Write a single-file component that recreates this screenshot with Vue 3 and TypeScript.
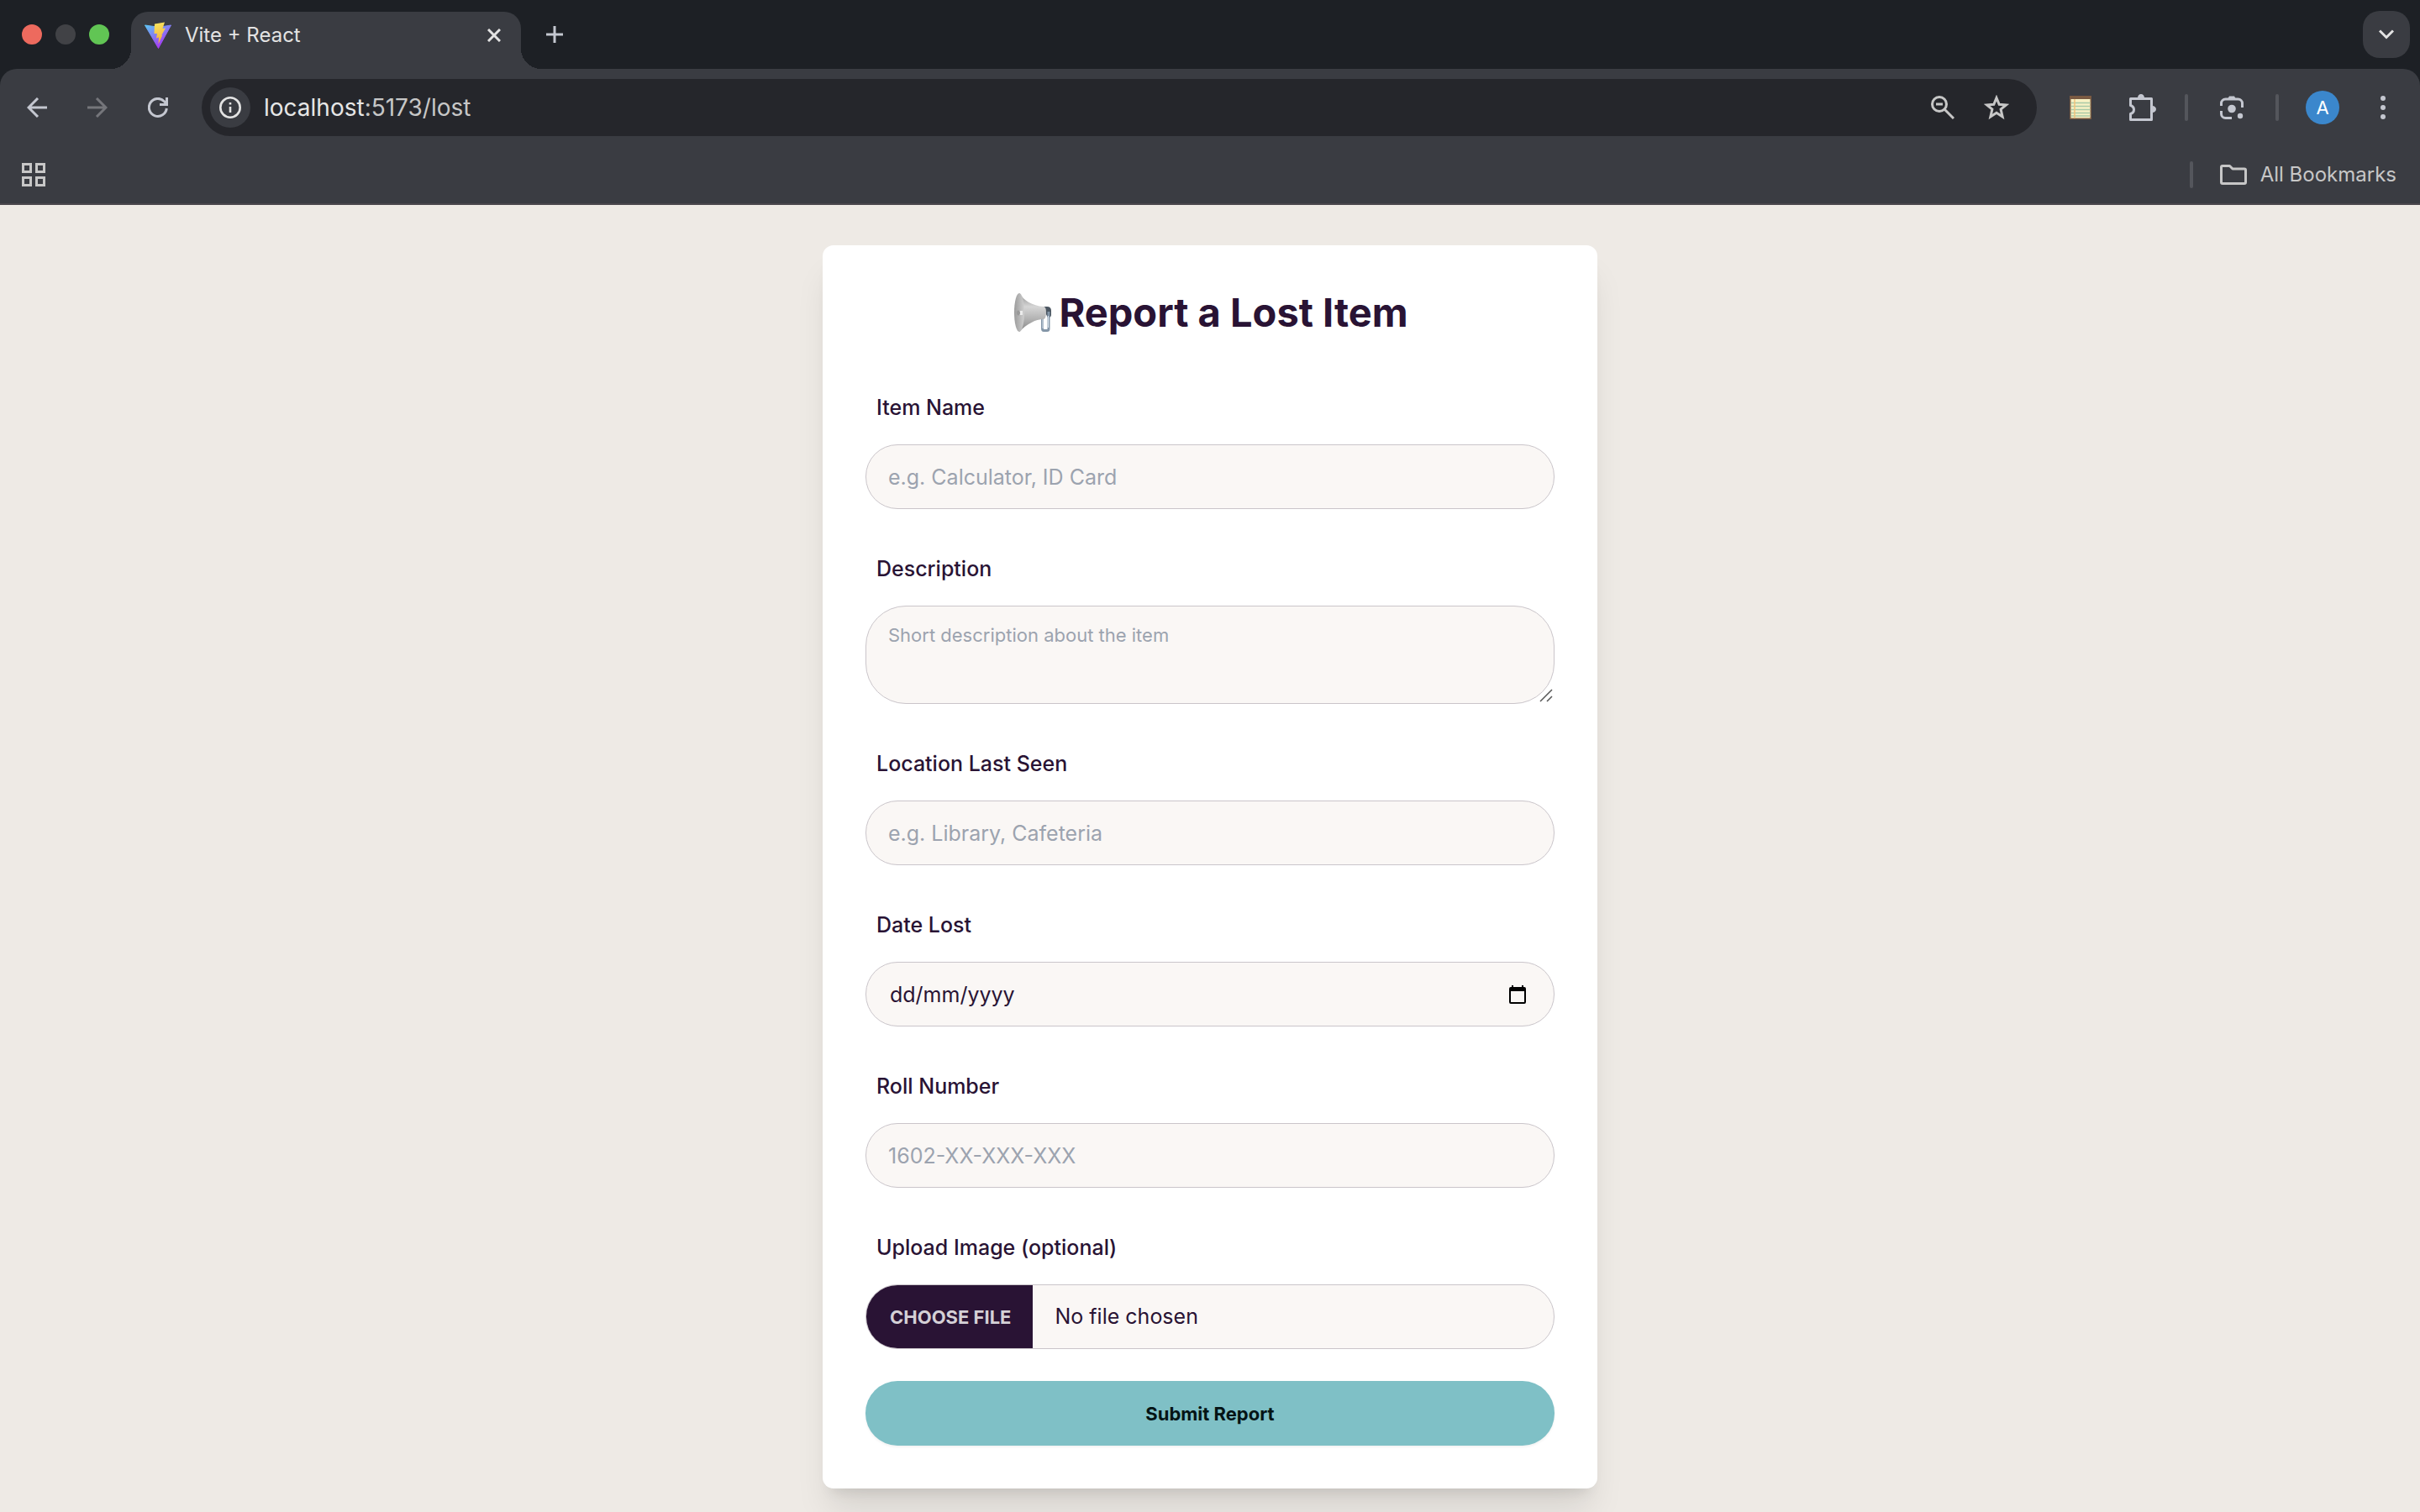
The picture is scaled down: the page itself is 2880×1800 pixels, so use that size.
<script setup lang="ts">
import { ref } from 'vue'

interface Field {
  id: string
  label: string
  kind: 'text' | 'textarea' | 'date' | 'file'
  placeholder: string
}

const fields: Field[] = [
  { id: 'itemName', label: 'Item Name', kind: 'text', placeholder: 'e.g. Calculator, ID Card' },
  { id: 'description', label: 'Description', kind: 'textarea', placeholder: 'Short description about the item' },
  { id: 'location', label: 'Location Last Seen', kind: 'text', placeholder: 'e.g. Library, Cafeteria' },
  { id: 'dateLost', label: 'Date Lost', kind: 'date', placeholder: 'dd/mm/yyyy' },
  { id: 'rollNumber', label: 'Roll Number', kind: 'text', placeholder: '1602-XX-XXX-XXX' },
  { id: 'image', label: 'Upload Image (optional)', kind: 'file', placeholder: '' },
]

const values = ref<Record<string, string>>({
  itemName: '',
  description: '',
  location: '',
  dateLost: '',
  rollNumber: '',
})
</script>

<template>
  <div class="window">
    <header class="chrome">
      <div class="tab-strip">
        <div class="lights">
          <button class="light red" aria-label="Close window"></button>
          <button class="light grey" aria-label="Minimise window"></button>
          <button class="light green" aria-label="Zoom window"></button>
        </div>
        <div class="tab">
          <svg class="favicon" viewBox="0 0 32 32" width="32" height="32" aria-hidden="true">
            <defs>
              <linearGradient id="viteBody" x1="0" y1="0" x2="0.6" y2="0.9">
                <stop offset="0" stop-color="#5cc8f5" />
                <stop offset="1" stop-color="#a63cf2" />
              </linearGradient>
              <linearGradient id="viteBolt" x1="0.4" y1="0" x2="0.6" y2="1">
                <stop offset="0" stop-color="#f8e35c" />
                <stop offset="1" stop-color="#f2a93c" />
              </linearGradient>
            </defs>
            <path d="M0.500 4 L11 5.500 H22 L31.500 4 L16.500 31.500 Z" fill="url(#viteBody)" stroke="url(#viteBody)" stroke-linejoin="round" />
            <path d="M12 2.500 L24 0.500 L21.500 8 L25 7.500 L20.500 15.500 L21 16.500 L16.500 26.500 L17 18.500 L14 19.500 L15 14 L11.500 14 Z" fill="url(#viteBolt)" />
          </svg>
          <span class="tab-title">Vite + React</span>
          <button class="icon-btn small" aria-label="Close tab">
            <svg viewBox="0 0 16 16" width="16" height="16" stroke="#e3e3e3" stroke-width="3"><path d="M1 1 L15 15 M15 1 L1 15" /></svg>
          </button>
        </div>
        <button class="icon-btn new-tab" aria-label="New tab">
          <svg viewBox="0 0 20 20" width="20" height="20" stroke="#c4c7d0" stroke-width="3"><path d="M10 0 V20 M0 10 H20" /></svg>
        </button>
        <button class="tab-search" aria-label="Search tabs">
          <svg viewBox="0 0 18 12" width="18" height="12" fill="none" stroke="#e3e3e3" stroke-width="3"><path d="M1 1.500 L9 9.500 L17 1.500" /></svg>
        </button>
      </div>

      <div class="toolbar">
        <nav class="nav">
          <button class="icon-btn" aria-label="Back">
            <svg viewBox="0 0 24 24" width="24" height="24" fill="none" stroke="#c4c7d0" stroke-width="3"><path d="M24 12 H2 M13 1 L2 12 L13 23" /></svg>
          </button>
          <button class="icon-btn" aria-label="Forward">
            <svg viewBox="0 0 24 24" width="24" height="24" fill="none" stroke="#75767b" stroke-width="3"><path d="M0 12 H22 M11 1 L22 12 L11 23" /></svg>
          </button>
          <button class="icon-btn" aria-label="Reload">
            <svg viewBox="0 0 24 24" width="24" height="24" fill="none" stroke="#c4c7d0" stroke-width="3"><path d="M22.300 13 A10.500 10.500 0 1 1 19.500 4.700 L22.500 8 M22.500 0 V8.500 H14" /></svg>
          </button>
        </nav>
        <div class="address">
          <button class="site-info" aria-label="Site information">
            <svg viewBox="0 0 26 26" width="26" height="26" fill="none" stroke="#e3e3e3"><circle cx="13" cy="13" r="11.700" stroke-width="2.600" /><path d="M13 12 V19 M13 7 V9.600" stroke-width="2.600" /></svg>
          </button>
          <a class="url" href="#lost">localhost<span class="url-rest">:5173/lost</span></a>
          <button class="icon-btn" aria-label="Zoom">
            <svg viewBox="0 0 28 28" width="28" height="28" fill="none" stroke="#c7c7c7" stroke-width="3"><circle cx="10" cy="10" r="8.500" /><path d="M16 16 L27 27 M6 10 H14" /></svg>
          </button>
          <button class="icon-btn" aria-label="Bookmark this tab">
            <svg viewBox="0 0 30 30" width="30" height="30" fill="none" stroke="#c7c7c7" stroke-width="3"><path d="M15 3.500 L18.200 11.300 L26.500 12 L20.100 17.200 L22.100 26 L15 21.200 L7.900 26 L9.900 17.200 L3.500 12 L11.800 11.300 Z" /></svg>
          </button>
        </div>
        <div class="extensions">
          <button class="icon-btn" aria-label="Notes">
            <svg viewBox="0 0 26 28" width="26" height="28"><rect width="26" height="28" fill="#7a5a42" /><rect x="1.500" y="4" width="23" height="22.500" fill="#f7f1c4" /><path d="M2 8.500 H24.500 M2 12.500 H24.500 M2 16.500 H24.500 M2 20.500 H24.500 M2 24 H24.500" stroke="#a9c9a6" stroke-width="1.500" /><path d="M6 4 V26.500" stroke="#f0c27c" stroke-width="1.500" /></svg>
          </button>
          <button class="icon-btn" aria-label="Extensions">
            <svg viewBox="-4 0 36 32" width="36" height="32"><path d="M1.500 5.500 H26.500 V30.500 H1.500 V23.500 C4.500 22.500 5.500 20.500 5.500 18.500 C5.500 16.500 4.500 14.500 1.500 13.500 Z" fill="none" stroke="#c4c7d0" stroke-width="3" stroke-linejoin="round" /><path d="M10 4.500 A4 4.500 0 0 1 18 4.500 Z M27.500 14 A4.500 4 0 0 1 27.500 22 Z" fill="#c4c7d0" /></svg>
          </button>
        </div>
        <span class="divider"></span>
        <button class="icon-btn" aria-label="Search with Lens">
          <svg viewBox="0 0 28 28" width="28" height="28" fill="none" stroke="#c4c7d0" stroke-width="3"><path d="M1.500 12 V9 A5 5 0 0 1 6.500 4 H21.500 A5 5 0 0 1 26.500 9 V14 M1.500 18 V21.500 A5 5 0 0 0 6.500 26.500 H14" /><path d="M9 4 L11 0.500 H17 L19 4 Z" fill="#c4c7d0" stroke="none" /><circle cx="14" cy="15.500" r="4.800" fill="#c4c7d0" stroke="none" /><circle cx="24" cy="24" r="3.200" fill="#c4c7d0" stroke="none" /></svg>
        </button>
        <span class="divider"></span>
        <div class="profile">
          <button class="icon-btn" aria-label="Profile"><span class="avatar">A</span></button>
          <button class="icon-btn" aria-label="Menu">
            <svg viewBox="0 0 6 28" width="6" height="28" fill="#c4c7d0"><circle cx="3" cy="3" r="3" /><circle cx="3" cy="14" r="3" /><circle cx="3" cy="25" r="3" /></svg>
          </button>
        </div>
      </div>

      <div class="bookmarks">
        <button class="icon-btn apps" aria-label="Apps">
          <svg viewBox="0 0 28 28" width="28" height="28" fill="none" stroke="#c7c7c7" stroke-width="3"><path d="M1.500 1.500 H10.500 V10.500 H1.500 Z M17.500 1.500 H26.500 V10.500 H17.500 Z M1.500 17.500 H10.500 V26.500 H1.500 Z M17.500 17.500 H26.500 V26.500 H17.500 Z" /></svg>
        </button>
        <span class="divider"></span>
        <button class="all-bookmarks">
          <svg viewBox="0 0 32 24" width="32" height="24" fill="none" stroke="#c7c7c7" stroke-width="3" stroke-linejoin="round"><path d="M1.500 3 Q1.500 1.500 3 1.500 H11.500 L15 5 H29 Q30.500 5 30.500 6.500 V21 Q30.500 22.500 29 22.500 H3 Q1.500 22.500 1.500 21 Z" /></svg>
          All Bookmarks
        </button>
      </div>
    </header>

    <main class="page">
      <section class="card">
        <h1 class="title">
          <svg viewBox="0 0 48 48" width="48" height="48" aria-hidden="true">
            <defs>
              <linearGradient id="horn" x1="0" y1="0" x2="0" y2="1">
                <stop offset="0" stop-color="#8d8d8d" />
                <stop offset="0.350" stop-color="#d6d6d6" />
                <stop offset="0.650" stop-color="#b5b5b5" />
                <stop offset="1" stop-color="#858585" />
              </linearGradient>
              <linearGradient id="bell" x1="0" y1="0" x2="1" y2="0">
                <stop offset="0" stop-color="#9c9c9c" />
                <stop offset="1" stop-color="#cfcfcf" />
              </linearGradient>
            </defs>
            <path d="M36 17 H42 Q47 17 47 22 V27 Q47 30 43 30 Z" fill="#4b5661" />
            <path d="M36.500 25 V43 Q36.500 45.500 38 45.500 H42 Q44 45.500 44 43.500 V23" fill="none" stroke="#8496a8" stroke-width="3" />
            <path d="M37 28 V43 M43.500 28 V42" stroke="#dbe6f0" stroke-width="1" />
            <path d="M9 1 C15 10 24 16 38 17 Q41 17 41 24 Q41 31 38 32 C28 32 18 38 9 47 Z" fill="url(#horn)" />
            <ellipse cx="9" cy="24" rx="6" ry="23" fill="url(#bell)" />
            <path d="M8 22 H13 V27 H8 Z" fill="#ececec" />
            <ellipse cx="8" cy="24.500" rx="2" ry="3" fill="#999" />
          </svg>
          <span>Report a Lost Item</span>
        </h1>

        <form class="form" @submit.prevent>
          <div v-for="field in fields" :key="field.id" class="field">
            <label class="label" :for="field.id">{{ field.label }}</label>

            <input v-if="field.kind === 'text'" :id="field.id" v-model="values[field.id]" class="control" type="text" :placeholder="field.placeholder" />

            <div v-else-if="field.kind === 'textarea'" class="holder">
              <textarea :id="field.id" v-model="values[field.id]" class="control area" :placeholder="field.placeholder"></textarea>
              <svg class="grip" viewBox="0 0 16 16" width="16" height="16" stroke="#555" stroke-width="1.500" aria-hidden="true"><path d="M1 15 L15 1 M9 15 L15 9" /></svg>
            </div>

            <div v-else-if="field.kind === 'date'" class="holder">
              <input :id="field.id" v-model="values[field.id]" class="control date" type="text" inputmode="numeric" :placeholder="field.placeholder" />
              <button class="calendar" type="button" aria-label="Open calendar">
                <svg viewBox="0 0 20 22" width="20" height="22"><path d="M2 2 H3 V0 H5 V2 H15 V0 H17 V2 H18 Q20 2 20 4 V20 Q20 22 18 22 H2 Q0 22 0 20 V4 Q0 2 2 2 Z M2 7 V20 H18 V7 Z" fill="#000" fill-rule="evenodd" /></svg>
              </button>
            </div>

            <input v-else :id="field.id" class="control file" type="file" accept="image/*" />
          </div>

          <button class="submit" type="submit">Submit Report</button>
        </form>
      </section>
    </main>
  </div>
</template>

<style>
body {
  margin: 0;
  background: #eeeae5;
}
</style>

<style scoped>
.window {
  display: flex;
  flex-direction: column;
  min-height: 100vh;
  font-family: Inter, "Liberation Sans", sans-serif;
  color: #291334;
}

.window *,
.window *::file-selector-button {
  box-sizing: border-box;
}

button,
input,
textarea {
  margin: 0;
  font-family: inherit;
}

button {
  padding: 0;
  border: 0;
  background: none;
  color: inherit;
}

svg {
  display: block;
  flex: none;
}

/* Browser frame */
.chrome {
  background: #1d2025;
  border-bottom: 2px solid #4a474c;
}

.tab-strip {
  display: flex;
  align-items: center;
  height: 82px;
  padding: 0 12px 0 26px;
}

.lights {
  display: flex;
  gap: 16px;
  margin-right: 26px;
}

.light {
  width: 24px;
  height: 24px;
  border-radius: 50%;
}

.red {
  background: #ed6a5e;
}

.grey {
  background: #414246;
}

.green {
  background: #61c554;
}

.tab {
  position: relative;
  display: flex;
  align-items: center;
  align-self: flex-end;
  width: 464px;
  height: 68px;
  padding: 0 16px;
  border-radius: 20px 20px 0 0;
  background: #3a3c42;
}

.tab::before,
.tab::after {
  content: "";
  position: absolute;
  bottom: 0;
  width: 24px;
  height: 24px;
}

.tab::before {
  right: 100%;
  background: radial-gradient(circle at 0 0, transparent 24px, #3a3c42 24px);
}

.tab::after {
  left: 100%;
  background: radial-gradient(circle at 100% 0, transparent 24px, #3a3c42 24px);
}

.favicon {
  margin-bottom: 12px;
}

.tab-title {
  flex: 1;
  padding: 0 16px 12px;
  font-size: 24px;
  line-height: 32px;
  color: #e3e3e3;
}

.icon-btn {
  display: flex;
  align-items: center;
  justify-content: center;
  flex: none;
  width: 56px;
  height: 56px;
}

.icon-btn.small {
  width: 32px;
  height: 32px;
  margin-bottom: 12px;
}

.new-tab {
  margin-left: 12px;
}

.tab-search {
  display: flex;
  align-items: center;
  justify-content: center;
  width: 56px;
  height: 56px;
  margin-left: auto;
  border-radius: 20px;
  background: #3a3c42;
}

.toolbar {
  display: flex;
  align-items: center;
  gap: 24px;
  padding: 12px 16px;
  border-radius: 20px 20px 0 0;
  background: #3a3c42;
}

.nav,
.extensions,
.profile {
  display: flex;
  gap: 16px;
}

.address {
  display: flex;
  align-items: center;
  flex: 1;
  gap: 8px;
  height: 68px;
  padding: 0 20px 0 10px;
  border-radius: 34px;
  background: #25262b;
}

.site-info {
  display: flex;
  align-items: center;
  justify-content: center;
  width: 48px;
  height: 48px;
  border-radius: 50%;
  background: #3a3c42;
}

.url {
  flex: 1;
  padding-left: 8px;
  font-size: 28px;
  line-height: 36px;
  color: #e6e6e6;
  text-decoration: none;
}

.url-rest {
  color: #c7c7c7;
}

.divider {
  flex: none;
  width: 4px;
  height: 32px;
  border-radius: 2px;
  background: #54565c;
}

.avatar {
  display: flex;
  align-items: center;
  justify-content: center;
  width: 40px;
  height: 40px;
  border-radius: 50%;
  background: #3b87cc;
  font-size: 22px;
  color: #fff;
}

.bookmarks {
  display: flex;
  align-items: center;
  height: 68px;
  padding: 0 28px 0 12px;
  background: #3a3c42;
}

.apps {
  margin-right: auto;
}

.all-bookmarks {
  display: flex;
  align-items: center;
  gap: 16px;
  margin-left: 32px;
  font-size: 24px;
  line-height: 32px;
  color: #c7c7c7;
}

/* Report page */
.page {
  display: flex;
  justify-content: center;
  align-items: flex-start;
  flex: 1;
  padding: 48px 24px 28px;
  background: #eeeae5;
}

.card {
  width: 100%;
  max-width: 922px;
  padding: 51px;
  border-radius: 13px;
  background: #fff;
  box-shadow: 0 32px 40px -8px rgba(0, 0, 0, 0.1), 0 13px 16px -10px rgba(0, 0, 0, 0.1);
}

.title {
  display: flex;
  align-items: center;
  justify-content: center;
  gap: 8px;
  margin: 0 0 65px;
  font-size: 47px;
  font-weight: 700;
  line-height: 58px;
}

.form {
  display: flex;
  flex-direction: column;
  gap: 52px;
}

.field {
  display: flex;
  flex-direction: column;
  gap: 25px;
}

.label {
  padding: 0 13px;
  font-size: 25px;
  font-weight: 500;
  line-height: 38px;
}

.holder {
  position: relative;
  display: flex;
  align-items: center;
}

.control {
  display: block;
  width: 100%;
  height: 77px;
  padding: 0 26px;
  border: 1px solid #cac5ca;
  border-radius: 38px;
  outline: 0;
  background: #faf7f5;
  font-size: 25px;
  line-height: 38px;
  color: #291334;
}

.control::placeholder {
  color: #9ca3af;
  opacity: 1;
}

.control.date {
  padding-left: 28px;
}

.control.date::placeholder {
  color: #291334;
}

.area {
  height: 117px;
  padding: 16px 26px;
  border-radius: 48px;
  font-size: 22px;
  line-height: 36px;
  resize: none;
}

.grip {
  position: absolute;
  right: 2px;
  bottom: 2px;
  pointer-events: none;
}

.calendar {
  position: absolute;
  right: 34px;
}

.file {
  padding: 0 26px 0 0;
  overflow: hidden;
  line-height: 75px;
}

.file::file-selector-button {
  height: 75px;
  margin: 0 26px 0 0;
  padding: 0 26px 0 28px;
  border: 0;
  background: #291334;
  font-family: inherit;
  font-size: 22px;
  font-weight: 700;
  line-height: 32px;
  vertical-align: top;
  text-transform: uppercase;
  color: #d4d0d6;
}

.submit {
  height: 77px;
  margin-top: -14px;
  border-radius: 38px;
  background: #7fc0c6;
  box-shadow: 0 2px 3px rgba(0, 0, 0, 0.05);
  font-size: 22px;
  font-weight: 700;
  color: #051415;
}
</style>
